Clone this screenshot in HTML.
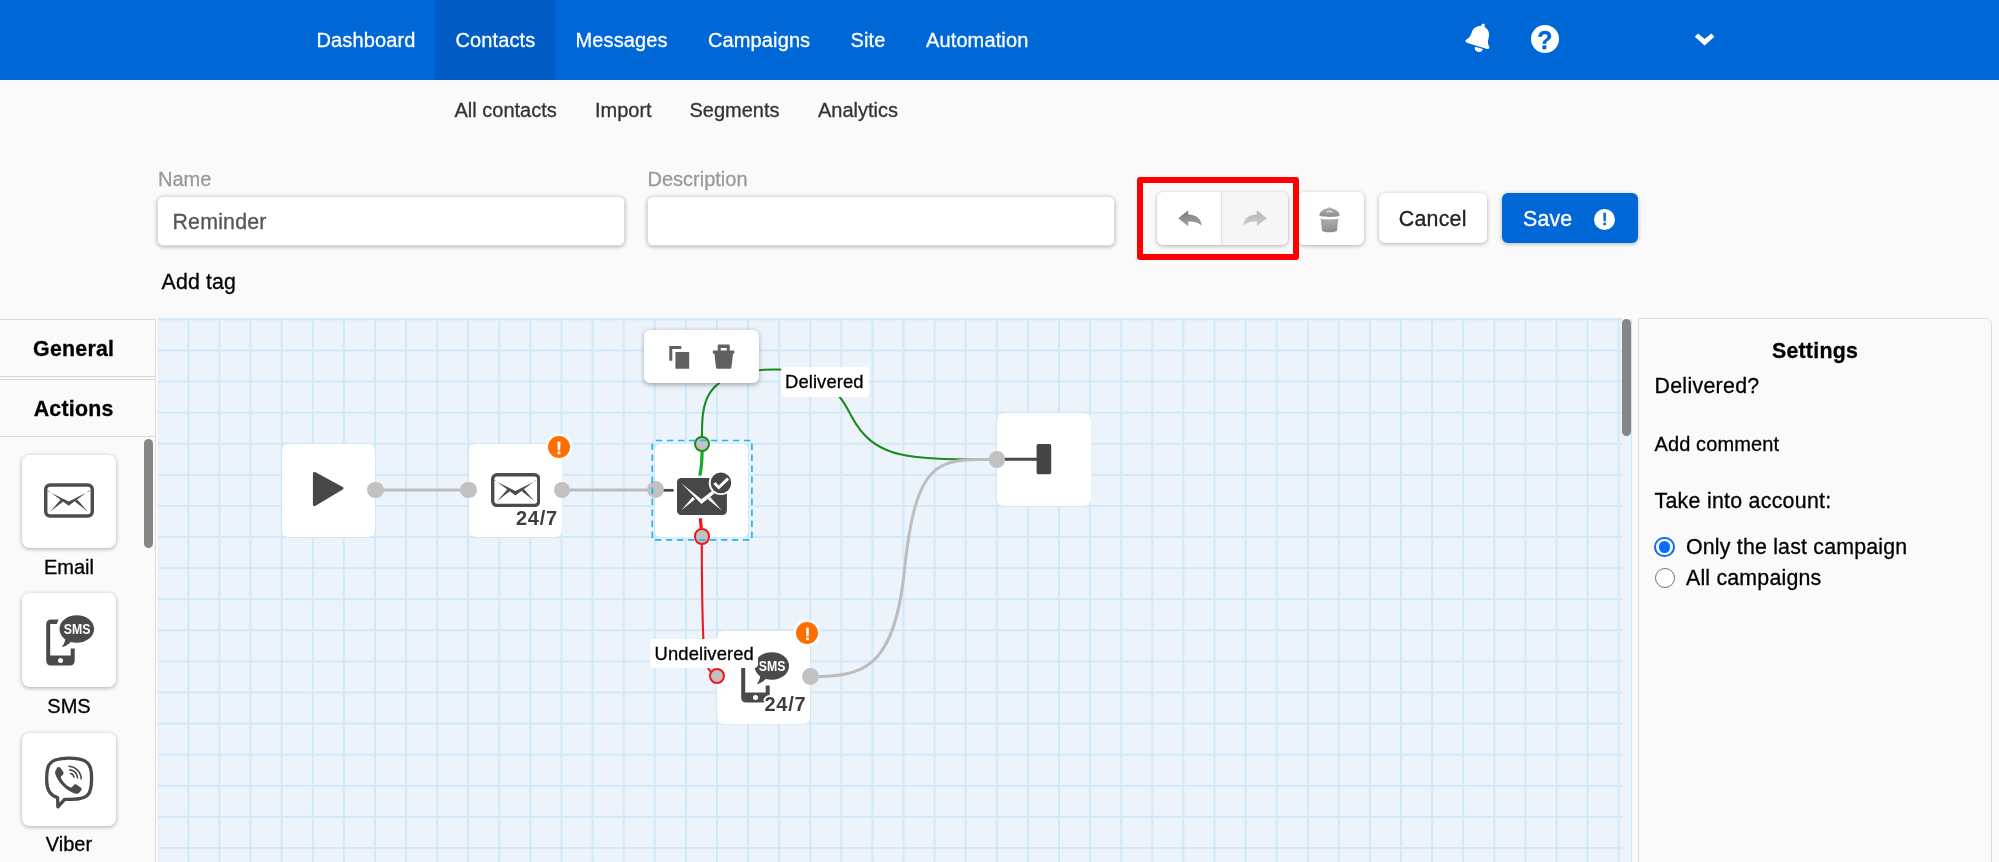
<!DOCTYPE html>
<html lang="en">
<head>
<meta charset="utf-8">
<title>Reminder - Workflow editor</title>
<style>
html,body{margin:0;padding:0}
body{width:1999px;height:862px;overflow:hidden;background:#fafafa;will-change:transform;font-family:"Liberation Sans",sans-serif;position:relative;color:#000}
.a{position:absolute}
.t{position:absolute;white-space:nowrap;line-height:1;-webkit-text-stroke:.3px}
/* header */
#hdr{left:0;top:0;width:1999px;height:80px;background:#0067d6}
#hdr .act{left:435px;top:0;width:120px;height:80px;background:#005cc4}
.nav{font-size:20px;color:#fff;top:30px;letter-spacing:.12px}
.sub{font-size:20px;color:#333;top:100px}
/* form */
.lbl{font-size:20px;color:#999;top:168.6px}
.inp{background:#fff;border:1px solid #ddd;border-radius:6px;box-shadow:0 1px 4px rgba(0,0,0,.28);box-sizing:border-box}
.btn{background:#fff;border-radius:6px;box-shadow:0 1px 4px rgba(0,0,0,.3);box-sizing:border-box}
/* sidebar */
.tab{left:-2px;width:157.8px;height:58px;border:1.5px solid #d8d8d8;box-sizing:border-box;background:#fafafa}
.tabt{font-weight:bold;font-size:21.33px;width:155px;text-align:center;left:-4px}
.card{left:22px;width:94px;height:93.5px;background:#fff;border-radius:7.5px;box-shadow:0 1px 4px rgba(0,0,0,.32)}
.cl{font-size:20px;width:138px;left:0;text-align:center}
/* canvas */
#cv{left:157.7px;top:317.9px;width:1463.9px;height:545px;background-color:#ecf3fb;overflow:hidden}
#cvg{left:0.5px;top:0;width:1463.4px;height:545px;
background-image:linear-gradient(to right,#d1e8f9 1.6px,transparent 1.6px),linear-gradient(to bottom,#d1e8f9 1.6px,transparent 1.6px);
background-size:31.1px 31.1px;background-position:29.4px 0.4px}
.node{background:#fff;border-radius:7px;width:93.3px;height:93.3px}
.port{width:16.8px;height:16.8px;border-radius:50%;background:#c1c1c1;box-sizing:border-box}
.badge{width:22px;height:22px;border-radius:50%;background:#ff6f00;box-shadow:0 0 0 1.8px #fff,0 0 1.5px 2.4px rgba(255,255,255,.75)}
.clab{background:#fff;border-radius:4px;font-size:18.4px}
.b247{-webkit-text-stroke:0;font-weight:bold;font-size:20px;color:#3e3e3e;letter-spacing:.7px;text-shadow:-2px 0 #fff,2px 0 #fff,0 -2px #fff,0 2px #fff,-1.5px -1.5px #fff,1.5px 1.5px #fff,-1.5px 1.5px #fff,1.5px -1.5px #fff}
/* settings */
#set{left:1638.1px;top:318px;width:353.9px;height:560px;border:1.3px solid #dedede;border-radius:2px 5.5px 0 0;box-sizing:border-box;background:#fafafa}
.s21{font-size:21.33px}
</style>
</head>
<body>

<!-- ===== HEADER ===== -->
<div id="hdr" class="a">
  <div class="a act"></div>
  <span class="t nav" style="left:316.5px">Dashboard</span>
  <span class="t nav" style="left:455.5px">Contacts</span>
  <span class="t nav" style="left:575.5px">Messages</span>
  <span class="t nav" style="left:708px">Campaigns</span>
  <span class="t nav" style="left:850.5px">Site</span>
  <span class="t nav" style="left:926px">Automation</span>
  <svg class="a" style="left:1455px;top:15px" width="45" height="45" viewBox="1455 15 45 45">
    <g transform="translate(1476.9 45.8) rotate(17) scale(0.0553) translate(-224 -416)" fill="#fff"><path d="M197 441 A74 74 0 0 0 345 441 Z"/><path d="M439.39 362.29c-19.32-20.76-55.47-51.99-55.47-154.29 0-77.7-54.48-139.9-127.94-155.16V32c0-17.67-14.32-32-31.98-32s-31.98 14.33-31.98 32v20.84C118.56 68.1 64.08 130.3 64.08 208c0 102.3-36.15 133.53-55.47 154.29-6 6.45-8.66 14.16-8.61 21.71.11 16.4 12.98 32 32.1 32h383.8c19.12 0 32-15.6 32.1-32 .05-7.55-2.61-15.27-8.61-21.71z"/></g>
  </svg>
  <div class="a" style="left:1530.8px;top:24.7px;width:28px;height:28px;border-radius:50%;background:#fff"></div>
  <span class="t" style="left:1530.8px;top:27.9px;width:28px;text-align:center;font-size:25px;font-weight:bold;color:#0067d6">?</span>
  <svg class="a" style="left:1690px;top:28px" width="30" height="22" viewBox="1690 28 30 22">
    <path d="M1694.8 36.7 L1698.1 33.4 L1704.6 39.1 L1711.4 33.4 L1714.4 36.7 L1704.6 45.4 Z" fill="#fff"/>
  </svg>
</div>

<!-- ===== SUBNAV ===== -->
<span class="t sub" style="left:454.5px">All contacts</span>
<span class="t sub" style="left:595px">Import</span>
<span class="t sub" style="left:689.5px">Segments</span>
<span class="t sub" style="left:818px">Analytics</span>

<!-- ===== FORM ROW ===== -->
<span class="t lbl" style="left:158px">Name</span>
<div class="a inp" style="left:157px;top:196px;width:468px;height:50px"></div>
<span class="t" style="left:172.5px;top:212px;font-size:21.33px;color:#555;letter-spacing:.2px">Reminder</span>
<span class="t lbl" style="left:647.5px">Description</span>
<div class="a inp" style="left:646.5px;top:196px;width:468px;height:50px"></div>
<span class="t" style="left:161.5px;top:271.9px;font-size:21.33px;letter-spacing:.15px">Add tag</span>

<!-- buttons placeholder -->
<div id="btns">
  <div class="a btn" style="left:1156.6px;top:192px;width:131.8px;height:53px;overflow:hidden;box-shadow:none">
    <div class="a" style="left:64.6px;top:0;width:68px;height:53px;background:#f6f6f6;border-left:1.3px solid #e0e0e0"></div>
  </div>
  <div class="a btn" style="left:1156.6px;top:192px;width:131.8px;height:53px;background:none"></div>
  <svg class="a" style="left:1178.2px;top:210.3px" width="24" height="16.5" viewBox="0 0 24 16.5">
    <defs><linearGradient id="gu" x1="0" y1="0" x2="0" y2="1"><stop offset="0" stop-color="#7c7c7c"/><stop offset="1" stop-color="#a2a2a2"/></linearGradient></defs>
    <path d="M0.2 8.2 L10.2 0.2 L10.2 4.6 C18.5 4.8 23.2 9 23.8 16 C20.6 12.2 16.4 11.4 10.2 11.4 L10.2 16.3 Z" fill="url(#gu)"/>
  </svg>
  <svg class="a" style="left:1243px;top:210.3px" width="24" height="16.5" viewBox="0 0 24 16.5">
    <defs><linearGradient id="gr" x1="0" y1="0" x2="0" y2="1"><stop offset="0" stop-color="#b4b4b4"/><stop offset="1" stop-color="#cdcdcd"/></linearGradient></defs>
    <path transform="translate(24,0) scale(-1,1)" d="M0.2 8.2 L10.2 0.2 L10.2 4.6 C18.5 4.8 23.2 9 23.8 16 C20.6 12.2 16.4 11.4 10.2 11.4 L10.2 16.3 Z" fill="url(#gr)"/>
  </svg>
  <div class="a btn" style="left:1297.5px;top:192px;width:66px;height:53px"></div>
  <svg class="a" style="left:1318.5px;top:206.8px" width="21" height="26" viewBox="0 0 21 26">
    <defs><linearGradient id="gt" x1="0" y1="0" x2="0" y2="1"><stop offset="0" stop-color="#b0b0b0"/><stop offset="1" stop-color="#8c8c8c"/></linearGradient></defs>
    <path d="M0.4 8.6 C0.4 5 4 2.2 8.3 1.6 C8.6 0.2 12.4 0.2 12.7 1.6 C17 2.2 20.6 5 20.6 8.6 C20.6 10.4 0.4 10.4 0.4 8.6 Z" fill="url(#gt)"/>
    <path d="M1.6 11.6 C6 12.8 15 12.8 19.4 11.6 L18 23.4 C17.6 25.8 3.4 25.8 3 23.4 Z" fill="url(#gt)"/>
    <path d="M7.6 5.6 C8.6 3.6 12.4 3.6 13.4 5.6" stroke="#e4e4e4" stroke-width="1.1" fill="none"/>
  </svg>
  <div class="a" style="left:1137.2px;top:177.2px;width:162.2px;height:83.2px;border:6px solid #fe0000;border-radius:3px;box-sizing:border-box"></div>
  <div class="a btn" style="left:1378.5px;top:193px;width:108.5px;height:50.2px"></div>
  <span class="t" style="left:1398.8px;top:209px;font-size:21.33px;color:#222;letter-spacing:.25px">Cancel</span>
  <div class="a btn" style="left:1502px;top:193px;width:135.8px;height:50.2px;background:#0067d6"></div>
  <span class="t" style="left:1523px;top:209px;font-size:21.33px;color:#fff;letter-spacing:.2px">Save</span>
  <div class="a" style="left:1594.2px;top:208.8px;width:21.2px;height:21.2px;border-radius:50%;background:#fff"></div>
  <span class="t" style="left:1594.2px;top:211.4px;width:21.2px;text-align:center;font-size:16.5px;font-weight:bold;color:#0067d6">!</span>
</div>

<!-- ===== SIDEBAR ===== -->
<div id="side">
  <div class="a tab" style="top:319.3px"></div>
  <span class="t tabt" style="top:338.8px;left:-3.8px;letter-spacing:.25px">General</span>
  <div class="a tab" style="top:379.3px"></div>
  <span class="t tabt" style="top:398.8px;left:-3.8px;letter-spacing:.25px">Actions</span>
  <div class="a" style="left:154.5px;top:319.3px;width:1.5px;height:545px;background:#dcdcdc"></div>
  <div class="a" style="left:143.6px;top:438.9px;width:9.5px;height:109.3px;border-radius:5px;background:#868686"></div>

  <div class="a card" style="top:454.8px"></div>
  <svg class="a" style="left:43.8px;top:483.4px" width="50" height="35" viewBox="0 0 49.5 34.2">
    <g><rect x="1.7" y="1.7" width="46.1" height="30.8" rx="4.4" fill="#fff" stroke="#4c4c4c" stroke-width="3.4"/>
    <path d="M3.6 6.9 L24.4 22.4 L45.2 6.9 L45.4 7.6 L24.4 18 L3.4 7.6 Z" fill="#4c4c4c"/>
    <path d="M6 28.2 L16.6 16 L19 18 Z M43.5 28.2 L32.9 16 L30.5 18 Z" fill="#4c4c4c"/></g>
  </svg>
  <span class="t cl" style="top:556.7px">Email</span>

  <div class="a card" style="top:593.2px"></div>
  <svg class="a" style="left:40px;top:610px" width="60" height="60" viewBox="0 0 60 60">
    <g>
    <path d="M18.6 9.6 L10.7 9.6 C8.2 9.6 6.2 11.6 6.2 14.1 L6.2 51 C6.2 53.5 8.2 55.5 10.7 55.5 L30.2 55.5 C32.7 55.5 34.7 53.5 34.7 51 L34.7 38.5 L30.7 38.5 L30.7 45.6 L10.2 45.6 L10.2 14.1 L16.8 14.1 Z" fill="#4a4a4a"/>
    <circle cx="20.5" cy="50.6" r="2.5" fill="#fff"/>
    <path d="M36.8 5.3 C46.4 5.3 54.1 11.4 54.1 19 C54.1 26.6 46.4 32.7 36.8 32.7 C34.7 32.7 32.7 32.4 30.8 31.9 C28.4 34.4 25.2 36.4 21.6 37.2 C23.6 34.8 24.8 32.2 25.2 29.4 C21.7 26.9 19.5 23.2 19.5 19 C19.5 11.4 27.2 5.3 36.8 5.3 Z" fill="#4a4a4a"/>
    <text x="37.1" y="24.3" text-anchor="middle" font-family="Liberation Sans, sans-serif" font-weight="bold" font-size="15.2" fill="#fff" textLength="26.6" lengthAdjust="spacingAndGlyphs">SMS</text>
    </g>
  </svg>
  <span class="t cl" style="top:695.5px">SMS</span>

  <div class="a card" style="top:732.5px"></div>
  <svg class="a" style="left:42px;top:754px" width="56" height="58" viewBox="0 0 56 58">
    <path d="M27 4.1 C40 4.1 48.6 6.6 49.4 19 C49.9 27 49.8 34 47 39.4 C44 44.8 36 45.6 27 45.4 L22.6 45.3 L15.9 52.8 L15.6 43.6 C8 41.6 4.9 36.4 4.7 27 C4.5 15 5.6 8.6 14 5.8 C18 4.5 22.4 4.1 27 4.1 Z" fill="#fff" stroke="#4a4a4a" stroke-width="3.3" stroke-linejoin="round"/>
    <path transform="translate(-2.2 0.2)" d="M17.4 13.4 C18.4 12.4 19.8 12.5 20.6 13.6 L23.4 17.6 C24.1 18.7 23.8 19.9 22.9 20.7 L21.5 21.9 C20.9 22.5 21 23.3 21.4 24.2 C23.1 27.7 26.5 31.3 30.3 33 C31.2 33.4 32 33.3 32.5 32.6 L33.8 31 C34.6 30 35.8 29.8 36.9 30.5 L40.9 33.2 C42 34 42.2 35.4 41.3 36.4 L39.6 38.3 C38.4 39.6 36.8 40 35.1 39.4 C26.5 36.4 18.6 28.6 15.6 20 C15 18.2 15.3 16.7 16.5 15.4 Z" fill="#4a4a4a"/>
    <g transform="translate(-1.6 0.3)" fill="none" stroke="#4a4a4a" stroke-width="1.6" stroke-linecap="round">
    <path d="M28.6 12 C35.4 12.6 40.4 17.4 40.8 24.6"/>
    <path d="M29.4 15.6 C33.8 16.2 36.8 19.2 37.2 23.6"/>
    <path d="M30.2 19.2 C32 19.6 33.3 20.9 33.6 22.8"/>
    </g>
  </svg>
  <span class="t cl" style="top:834.4px">Viber</span>
</div>

<!-- ===== CANVAS ===== -->
<div id="cv" class="a"><div id="cvg" class="a"></div></div>
<div class="a" style="left:1621.6px;top:318.5px;width:9.7px;height:544px;background:#ecf3fb;border-right:1.6px solid #cbe5f8"></div>
<div class="a" style="left:1622.1px;top:318.9px;width:9px;height:117.5px;border-radius:5px;background:#868686"></div>

<!-- connections -->
<svg class="a" style="left:0;top:0" width="1999" height="862" viewBox="0 0 1999 862">
  <path d="M375.6 490 L468.7 490 M561.9 490 L655.7 490" stroke="#bdbdbd" stroke-width="3" fill="none"/>
  <path id="gcurve" d="M702 444 C702 408.8 697.6 369.5 775.6 369.5 C827.9 369.5 842 398.6 851.3 416 C874.5 459.6 907.6 459.5 997 459.5" stroke="#1c8a1c" stroke-width="2.1" fill="none"/>
  <path id="rcurve" d="M701.8 536.9 C701.8 590 702.5 622 703.6 644 C704.4 660 706.5 672.5 717.3 676.5" stroke="#f01818" stroke-width="2.1" fill="none"/>
  <path id="ycurve" d="M810.7 676.6 C862.5 676.6 894.1 670.2 904.5 569.8 C916.3 456.1 938.9 459.3 997 459.3" stroke="#bdbdbd" stroke-width="3" fill="none"/>
</svg>

<!-- start node -->
<div class="a node" style="left:282px;top:444px"></div>
<svg class="a" style="left:310px;top:468px" width="38" height="42" viewBox="0 0 38 42">
  <path d="M4.4 5.4 L32 20.2 L4.4 36.6 Z" fill="#484848" stroke="#484848" stroke-width="3" stroke-linejoin="round"/>
</svg>

<!-- email node -->
<div class="a node" style="left:469px;top:444px"></div>
<svg class="a" style="left:490.6px;top:473px" width="49.5" height="34.2" viewBox="0 0 49.5 34.2"><g><rect x="1.7" y="1.7" width="46.1" height="30.8" rx="4.4" fill="#fff" stroke="#4c4c4c" stroke-width="3.4"/>
    <path d="M3.6 6.9 L24.4 22.4 L45.2 6.9 L45.4 7.6 L24.4 18 L3.4 7.6 Z" fill="#4c4c4c"/>
    <path d="M6 28.2 L16.6 16 L19 18 Z M43.5 28.2 L32.9 16 L30.5 18 Z" fill="#4c4c4c"/></g></svg>
<span class="t b247" style="left:516px;top:507.6px">24/7</span>
<div class="a badge" style="left:548px;top:436.1px"></div>
<span class="t" style="left:548px;top:439.9px;width:22px;text-align:center;font-size:16.5px;font-weight:bold;color:#fff">!</span>

<!-- condition node (selected) -->
<div class="a node" style="left:655px;top:443.6px;border-radius:6px"></div>
<svg class="a" style="left:650px;top:430px" width="110" height="120" viewBox="0 0 110 120">
  <path d="M52 14 C52.4 28 51.8 37 49.8 45.6" stroke="#0fae20" stroke-width="3.2" fill="none"/>
  <path d="M50.2 88.2 C50.9 93 51.5 99 51.7 106" stroke="#fa1212" stroke-width="3.2" fill="none"/>
  <path d="M5 60.3 L23.6 60.3" stroke="#474747" stroke-width="2.7" fill="none"/>
  <rect x="27" y="48" width="49.9" height="36.9" rx="4.3" fill="#474747"/>
  <path d="M31 53 L51.4 73.9 L64.4 63.4 L62.6 60.4 L51.4 69.3 Z" fill="#fff"/>
  <path d="M31.2 80.6 L42.6 67 L45 69.3 Z M71.8 80.6 L60.2 67 L57.8 69.3 Z" fill="#fff"/>
  <circle cx="70.9" cy="52.9" r="12.2" fill="#fff"/>
  <circle cx="70.9" cy="52.9" r="10.3" fill="#474747"/>
  <path d="M64.4 53 L68.8 57.5 L78 48.6" fill="none" stroke="#fff" stroke-width="3"/>
</svg>

<!-- end node -->
<div class="a node" style="left:997.4px;top:412.7px"></div>
<svg class="a" style="left:997px;top:440px" width="60" height="40" viewBox="0 0 60 40">
  <path d="M6 19.3 L40 19.3" stroke="#4a4a4a" stroke-width="3" fill="none"/>
  <rect x="39.6" y="4" width="14.6" height="30.2" rx="1.6" fill="#444"/>
</svg>

<!-- sms node -->
<div class="a node" style="left:717.1px;top:630.8px"></div>
<svg class="a" style="left:734.9px;top:646.5px" width="60" height="60" viewBox="0 0 60 60"><g>
    <path d="M18.6 9.6 L10.7 9.6 C8.2 9.6 6.2 11.6 6.2 14.1 L6.2 51 C6.2 53.5 8.2 55.5 10.7 55.5 L30.2 55.5 C32.7 55.5 34.7 53.5 34.7 51 L34.7 38.5 L30.7 38.5 L30.7 45.6 L10.2 45.6 L10.2 14.1 L16.8 14.1 Z" fill="#4a4a4a"/>
    <circle cx="20.5" cy="50.6" r="2.5" fill="#fff"/>
    <path d="M36.8 5.3 C46.4 5.3 54.1 11.4 54.1 19 C54.1 26.6 46.4 32.7 36.8 32.7 C34.7 32.7 32.7 32.4 30.8 31.9 C28.4 34.4 25.2 36.4 21.6 37.2 C23.6 34.8 24.8 32.2 25.2 29.4 C21.7 26.9 19.5 23.2 19.5 19 C19.5 11.4 27.2 5.3 36.8 5.3 Z" fill="#4a4a4a"/>
    <text x="37.1" y="24.3" text-anchor="middle" font-family="Liberation Sans, sans-serif" font-weight="bold" font-size="15.2" fill="#fff" textLength="26.6" lengthAdjust="spacingAndGlyphs">SMS</text>
    </g></svg>
<span class="t b247" style="left:764.5px;top:693.8px">24/7</span>
<div class="a badge" style="left:796.4px;top:622.2px"></div>
<span class="t" style="left:796.4px;top:626.4px;width:22px;text-align:center;font-size:16.5px;font-weight:bold;color:#fff">!</span>

<!-- ports -->
<div class="a port" style="left:367.2px;top:481.6px"></div>
<div class="a port" style="left:460.3px;top:481.6px"></div>
<div class="a port" style="left:553.5px;top:481.6px"></div>
<div class="a port" style="left:647.3px;top:481.4px"></div>
<div class="a port" style="left:693.9px;top:435.7px;border:2px solid #1c8a1c;width:16.4px;height:16.4px"></div>
<div class="a port" style="left:693.9px;top:528.3px;border:2px solid #f01818;width:16.4px;height:16.4px"></div>
<div class="a port" style="left:709.1px;top:668px;border:2px solid #f01818;width:16.4px;height:16.4px"></div>
<div class="a port" style="left:802.3px;top:668.3px"></div>
<div class="a port" style="left:988.6px;top:450.9px"></div>

<svg class="a" id="selbox" style="left:645px;top:435px" width="115" height="112" viewBox="645 435 115 112"><rect x="652.3" y="440.5" width="99.6" height="99.4" fill="none" stroke="#22b5ee" stroke-width="1.7" stroke-dasharray="6.4 4.6" stroke-dashoffset="7.4"/></svg>

<!-- connection labels -->
<div class="a clab" style="left:781px;top:366.8px;width:88px;height:30.1px"></div>
<span class="t" style="left:785px;top:373px;font-size:18.4px;letter-spacing:.1px">Delivered</span>
<div class="a clab" style="left:650.4px;top:639px;width:108px;height:29.1px"></div>
<span class="t" style="left:654.6px;top:644.8px;font-size:18.4px;letter-spacing:.1px">Undelivered</span>

<!-- node toolbar -->
<div class="a btn" style="left:644px;top:330.3px;width:115.2px;height:52.8px;box-shadow:0 1.5px 5px rgba(0,0,0,.3)"></div>
<svg class="a" style="left:666px;top:343px" width="26" height="28" viewBox="0 0 26 28">
  <path d="M3.3 3 L15.3 3 L15.3 6 L6.3 6 L6.3 17.8 L3.3 17.8 Z" fill="#606060"/>
  <rect x="9.4" y="9.1" width="13.8" height="16.6" rx="0.5" fill="#606060"/>
</svg>
<svg class="a" style="left:711px;top:343px" width="26" height="28" viewBox="0 0 26 28">
  <path d="M7.5 1.6 L17.9 1.6 Q18.7 1.6 18.7 2.4 L18.7 7.6 L22.7 7.6 Q23.3 7.6 23.3 8.2 L23.3 10.5 L1.8 10.5 L1.8 8.2 Q1.8 7.6 2.4 7.6 L6.7 7.6 L6.7 2.4 Q6.7 1.6 7.5 1.6 Z M9.7 4.9 L9.7 7.4 L15.7 7.4 L15.7 4.9 Z" fill="#606060" fill-rule="evenodd"/>
  <path d="M3.3 10 L22.1 10 L20.4 24.7 Q20.2 25.7 19.2 25.7 L6.3 25.7 Q5.3 25.7 5.1 24.7 Z" fill="#606060"/>
</svg>

<!-- ===== SETTINGS ===== -->
<div id="set" class="a"></div>
<span class="t s21" style="left:1638px;top:340.9px;width:354px;text-align:center;font-weight:bold;letter-spacing:.25px">Settings</span>
<span class="t s21" style="left:1654.5px;top:376px;letter-spacing:.3px">Delivered?</span>
<span class="t" style="left:1654.5px;top:433.8px;font-size:20px;letter-spacing:.12px">Add comment</span>
<span class="t s21" style="left:1654.5px;top:490.8px;letter-spacing:.28px">Take into account:</span>
<div class="a" style="left:1654.4px;top:537px;width:20.4px;height:20.4px;border-radius:50%;box-sizing:border-box;border:2.2px solid #0a6cff;background:#fff"></div>
<div class="a" style="left:1658.8px;top:541.4px;width:11.6px;height:11.6px;border-radius:50%;background:#0a6cff"></div>
<span class="t s21" style="left:1686px;top:536.8px;letter-spacing:.2px">Only the last campaign</span>
<div class="a" style="left:1654.6px;top:568px;width:20px;height:20px;border-radius:50%;box-sizing:border-box;border:1.8px solid #727272;background:#fff"></div>
<span class="t s21" style="left:1686px;top:568.2px;letter-spacing:.2px">All campaigns</span>

</body>
</html>
